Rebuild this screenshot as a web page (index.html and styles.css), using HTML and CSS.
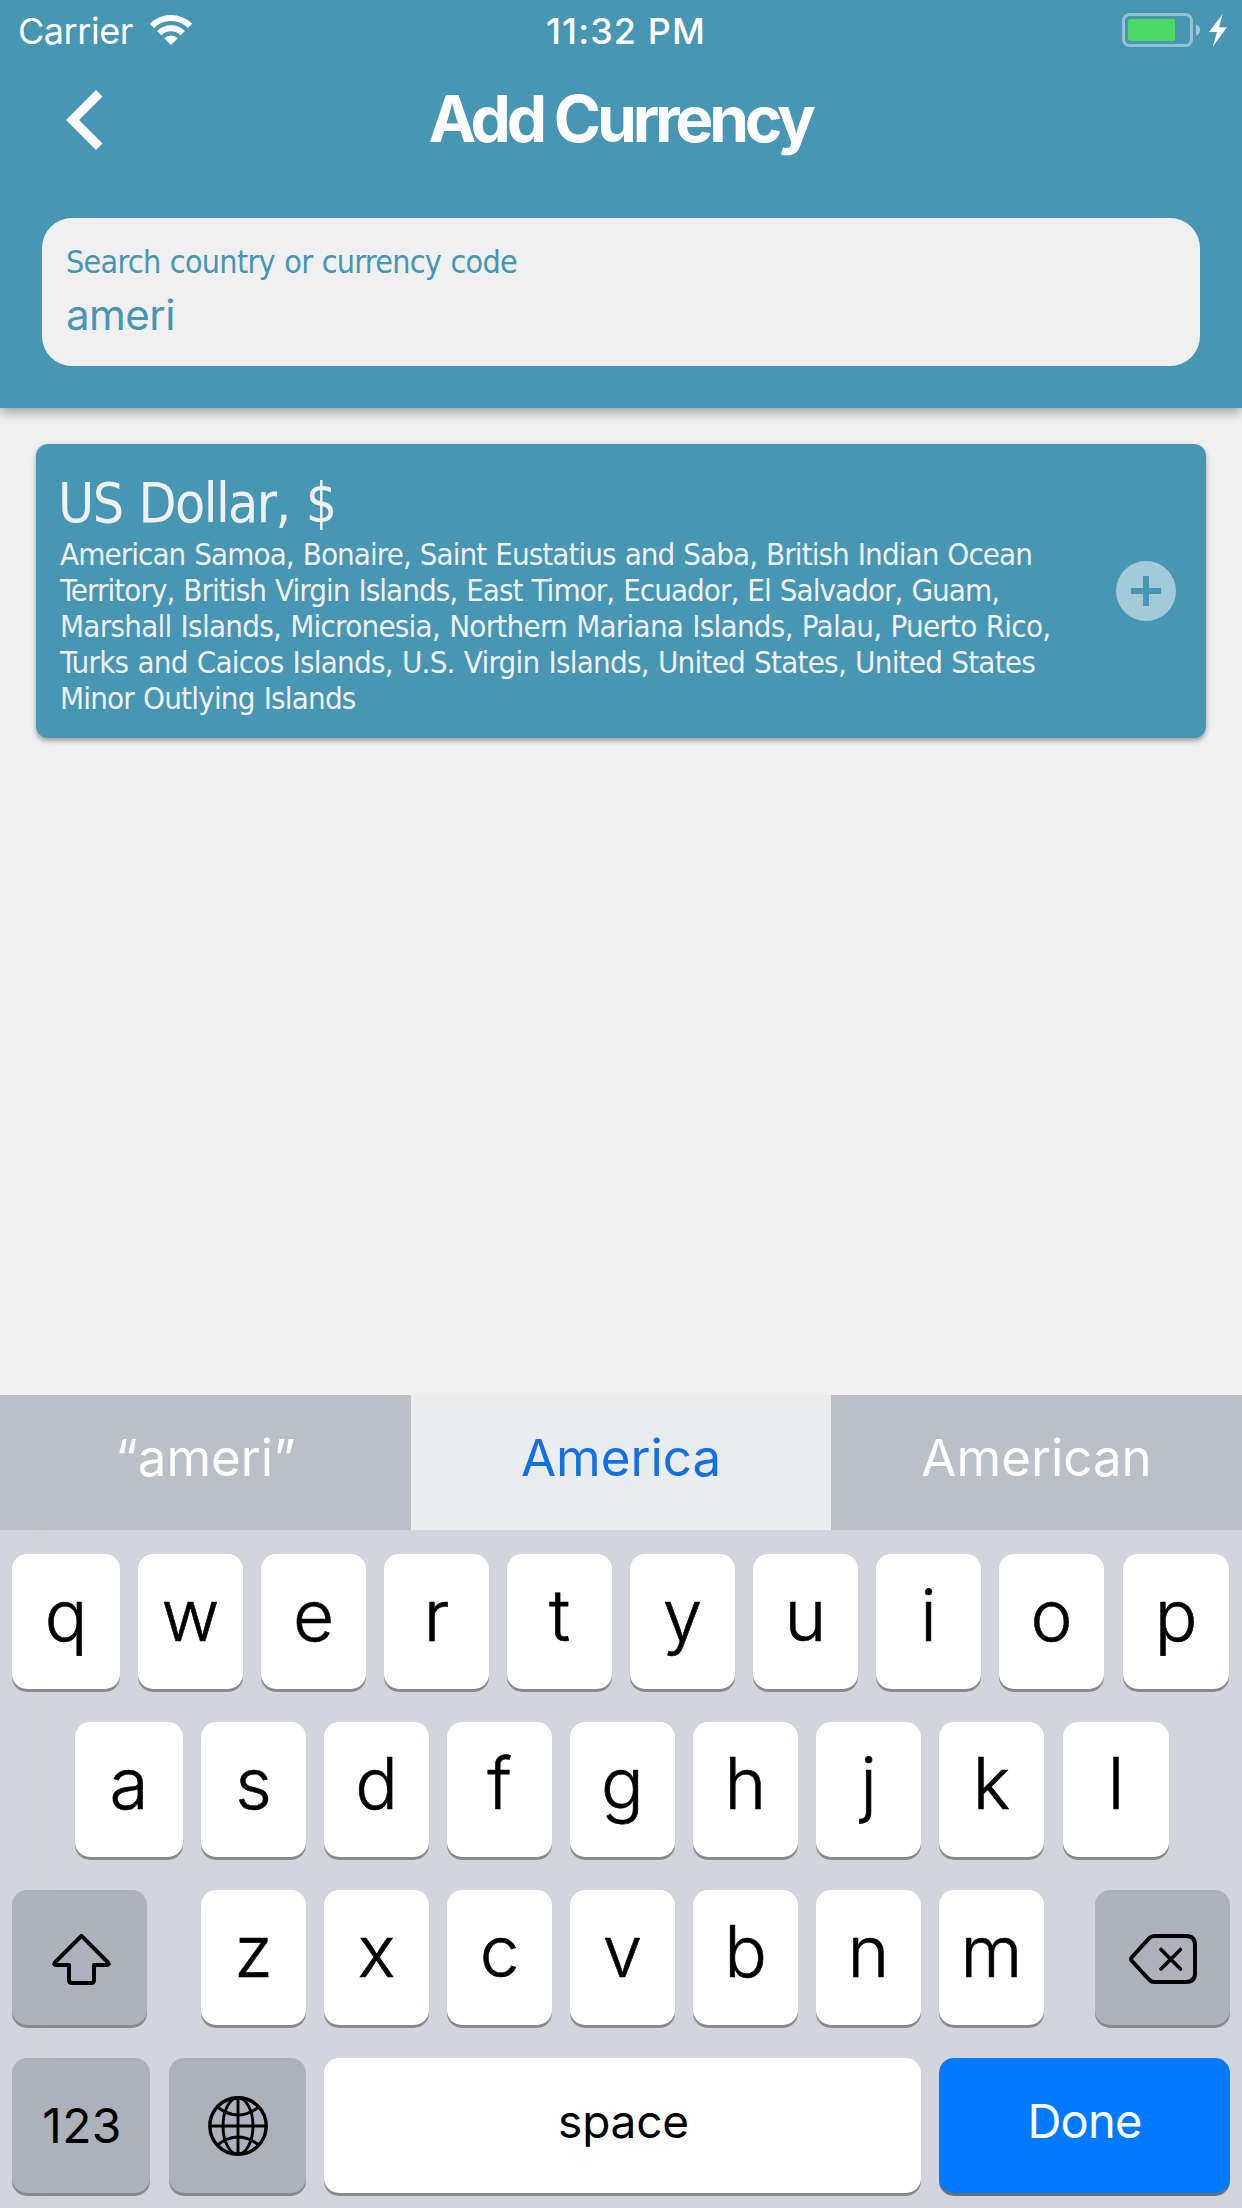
FILE: index.html
```html
<!DOCTYPE html>
<html lang="en">
<head>
<meta charset="utf-8">
<title>Add Currency</title>
<link rel="stylesheet" href="styles.css">
</head>
<body>
<div class="screen">
  <header class="header">
    <div class="status">
      <div class="status-left">
        <span class="carrier">Carrier</span>
        <svg class="wifi" width="42" height="30" viewBox="0 0 42 30" fill="none" stroke="#fff" stroke-width="6">
          <path d="M1.91 10.91A27 27 0 0 1 40.09 10.91"/>
          <path d="M9.19 18.19A16.7 16.7 0 0 1 32.81 18.19"/>
          <path d="M21 30L14.28 23.28A9.5 9.5 0 0 1 27.72 23.28Z" fill="#fff" stroke="none"/>
        </svg>
      </div>
      <span class="time">11:32 PM</span>
      <svg class="battery" width="105" height="34" viewBox="0 0 105 34">
        <rect x="1.5" y="1.5" width="68" height="31" rx="6" fill="none" stroke="#fff" stroke-opacity=".42" stroke-width="3"/>
        <path d="M9 6H53V28H9Q6 28 6 25V9Q6 6 9 6Z" fill="#4cd964"/>
        <path d="M74 11Q78 13 78 17T74 23Z" fill="#fff" fill-opacity=".5"/>
        <path d="M100.7 1L87 19H95L90.7 33.7L105 14.3H97Z" fill="#fff"/>
      </svg>
    </div>
    <div class="titlebar">
      <svg class="back" width="37" height="60" viewBox="0 0 37 60"><path d="M0 30L30 0L36.5 6.5L13 30L36.5 53.5L30 60Z" fill="#fff"/></svg>
      <h1 class="title">Add Currency</h1>
    </div>
    <div class="search">
      <label class="search-label">Search country or currency code</label>
      <div class="search-value">ameri</div>
    </div>
  </header>

  <main class="results">
    <article class="card">
      <div class="card-text">
        <h2 class="card-title">US Dollar, $</h2>
        <p class="countries">
          <span class="line line-1">American Samoa, Bonaire, Saint Eustatius and Saba, British Indian Ocean</span>
          <span class="line line-2">Territory, British Virgin Islands, East Timor, Ecuador, El Salvador, Guam,</span>
          <span class="line line-3">Marshall Islands, Micronesia, Northern Mariana Islands, Palau, Puerto Rico,</span>
          <span class="line line-4">Turks and Caicos Islands, U.S. Virgin Islands, United States, United States</span>
          <span class="line line-5">Minor Outlying Islands</span>
        </p>
      </div>
      <svg class="add" width="60" height="60" viewBox="0 0 60 60">
        <circle cx="30" cy="30" r="30" fill="#a3cad9"/>
        <path d="M30 15V45M15 30H45" stroke="#4796b3" stroke-width="6"/>
      </svg>
    </article>
  </main>

  <section class="keyboard">
    <div class="suggestions">
      <div class="suggestion">“ameri”</div>
      <div class="suggestion active">America</div>
      <div class="suggestion">American</div>
    </div>
    <div class="keys">
      <div class="row row-top">
        <div class="key">q</div><div class="key">w</div><div class="key">e</div><div class="key">r</div><div class="key">t</div><div class="key">y</div><div class="key">u</div><div class="key">i</div><div class="key">o</div><div class="key">p</div>
      </div>
      <div class="row row-home">
        <div class="key">a</div><div class="key">s</div><div class="key">d</div><div class="key">f</div><div class="key">g</div><div class="key">h</div><div class="key">j</div><div class="key">k</div><div class="key">l</div>
      </div>
      <div class="row">
        <div class="key gray shift">
          <svg width="59" height="52" viewBox="0 0 59 52" fill="none" stroke="#000" stroke-width="4" stroke-linejoin="round">
            <path d="M29.5 2.8L2.8 29.7Q1.5 32 4 32H17V47Q17 50 20 50H39Q42 50 42 47V32H55Q57.5 32 56.2 29.7Z"/>
          </svg>
        </div>
        <div class="key">z</div><div class="key">x</div><div class="key">c</div><div class="key">v</div><div class="key">b</div><div class="key">n</div><div class="key">m</div>
        <div class="key gray delete">
          <svg width="68" height="50" viewBox="0 0 68 50" fill="none" stroke="#000" stroke-width="4" stroke-linecap="round">
            <path d="M25 2H57Q66 2 66 11V39Q66 48 57 48H25Q22.5 48 20.5 46L3 27Q1.2 25 3 23L20.5 4Q22.5 2 25 2Z"/>
            <path d="M32 15.5L51.5 35M51.5 15.5L32 35" stroke-width="3.6"/>
          </svg>
        </div>
      </div>
      <div class="row">
        <div class="key gray numbers">123</div>
        <div class="key gray globe">
          <svg width="60" height="60" viewBox="-30 -30 60 60" fill="none" stroke="#000" stroke-width="2.9">
            <circle r="28.2" stroke-width="3.4"/>
            <ellipse rx="15" ry="28.2"/>
            <path d="M0-28V28M-28 0H28M-20.7-19Q0-3 20.7-19M-20.7 19Q0 3 20.7 19"/>
          </svg>
        </div>
        <div class="key space">space</div>
        <div class="key done">Done</div>
      </div>
    </div>
  </section>
</div>
</body>
</html>
```

FILE: styles.css
```css
* { box-sizing: border-box; margin: 0; padding: 0; }
body { font-family: Inter, "Liberation Sans", sans-serif; background: #f0f0f0; }
svg { display: block; flex: none; }

.screen { width: 1242px; height: 2208px; display: flex; flex-direction: column; overflow: hidden; }

.header { height: 408px; background: #4796b3; color: #fff; box-shadow: 0 3px 12px rgba(0, 0, 0, .4); }

.status { height: 62px; display: grid; grid-template-columns: 1fr auto 1fr; align-items: center; padding: 0 15px 0 18px; font-size: 36px; line-height: 62px; }
.status-left { display: flex; align-items: center; }
.carrier { width: 132px; letter-spacing: -.45px; }
.wifi { margin-top: -2px; }
.time { font-weight: 500; letter-spacing: 1.1px; padding-left: 5px; margin-right: -2px; }
.battery { justify-self: end; margin-top: -2px; }

.titlebar { height: 114px; display: grid; grid-template-columns: 150px 1fr 150px; align-items: center; }
.back { margin: 2px 0 0 66px; }
.title { padding-right: 2px; font-size: 64px; font-weight: 700; line-height: 114px; letter-spacing: -4.2px; text-align: center; white-space: nowrap; }

.search { margin: 42px 42px 0; height: 148px; padding: 23px 24px 0; border-radius: 30px; background: #f0f0f0; color: #4796b3; display: flex; flex-direction: column; gap: 6px; }
.search-label { font: 32px/42px "DejaVu Sans Condensed", "DejaVu Sans", sans-serif; letter-spacing: -.73px; word-spacing: 1px; }
.search-value { font-size: 42px; line-height: 52px; letter-spacing: -.55px; }

.results { flex: 1; padding: 36px; }
.card { height: 294px; padding: 26px 30px 22px 24px; border-radius: 12px; background: #4796b3; color: #f0f0f0; box-shadow: 0 3px 5px rgba(0, 0, 0, .35); display: flex; justify-content: space-between; font-family: "DejaVu Sans Condensed", "DejaVu Sans", sans-serif; }
.card-title { margin-left: -2px; font-size: 55px; font-weight: 400; line-height: 66px; letter-spacing: -1.6px; word-spacing: 2px; }
.add { margin-top: 91px; }
.countries { font-size: 31px; line-height: 36px; word-spacing: 1px; }
.line { display: block; white-space: nowrap; }
.line-1 { letter-spacing: -.92px; }
.line-2 { letter-spacing: -.94px; }
.line-3 { letter-spacing: -.74px; }
.line-4 { letter-spacing: -.76px; }
.line-5 { letter-spacing: -.8px; }

.keyboard { height: 813px; background: #d2d5dd; }
.suggestions { height: 135px; display: grid; grid-template-columns: 411px 420px 411px; }
.suggestion { display: flex; align-items: center; justify-content: center; padding-bottom: 10px; background: #bbbfc8; color: #fff; font-size: 51px; }
.suggestion.active { background: #ebecee; color: #1270e3; }

.keys { height: 678px; padding: 24px 12px 0; display: flex; flex-direction: column; gap: 33px; background: linear-gradient(90deg, transparent 33px, #d1d4d9 37px, #d1d4d9 49px, transparent 53px); }
.row { display: flex; gap: 18px; }
.key { width: 105px; height: 135px; border-radius: 15px; background: #fff; color: #000; box-shadow: 0 3px 0 #898a8e; display: flex; align-items: center; justify-content: center; padding-bottom: 13px; font-size: 71px; font-weight: 300; -webkit-text-stroke: .6px #000; }
.row-home { padding-left: 63px; }
.row-top .key:first-child, .row-home .key:first-child { width: 108px; }
.row-top .key:last-child, .row-home .key:last-child { width: 106px; margin-left: 1px; }
.gray { background: #adb1bc; }
.shift { width: 135px; margin-right: 36px; padding: 3px 0 0 4px; }
.delete { width: 135px; margin-left: 33px; padding: 3px 0 0 1px; }
.numbers, .space, .done { font-weight: 400; -webkit-text-stroke: 0; }
.numbers { width: 138px; padding: 0 0 1px 2px; font-size: 48px; letter-spacing: .3px; }
.globe { width: 137px; margin-left: 1px; padding: 1px 0 0; }
.space { width: 597px; padding: 0 0 9px 2px; font-size: 46px; letter-spacing: -.2px; }
.done { width: 291px; padding-bottom: 10px; background: #007aff; color: #fff; box-shadow: 0 3px 0 #69707a; font-size: 47px; letter-spacing: -.8px; }
```
